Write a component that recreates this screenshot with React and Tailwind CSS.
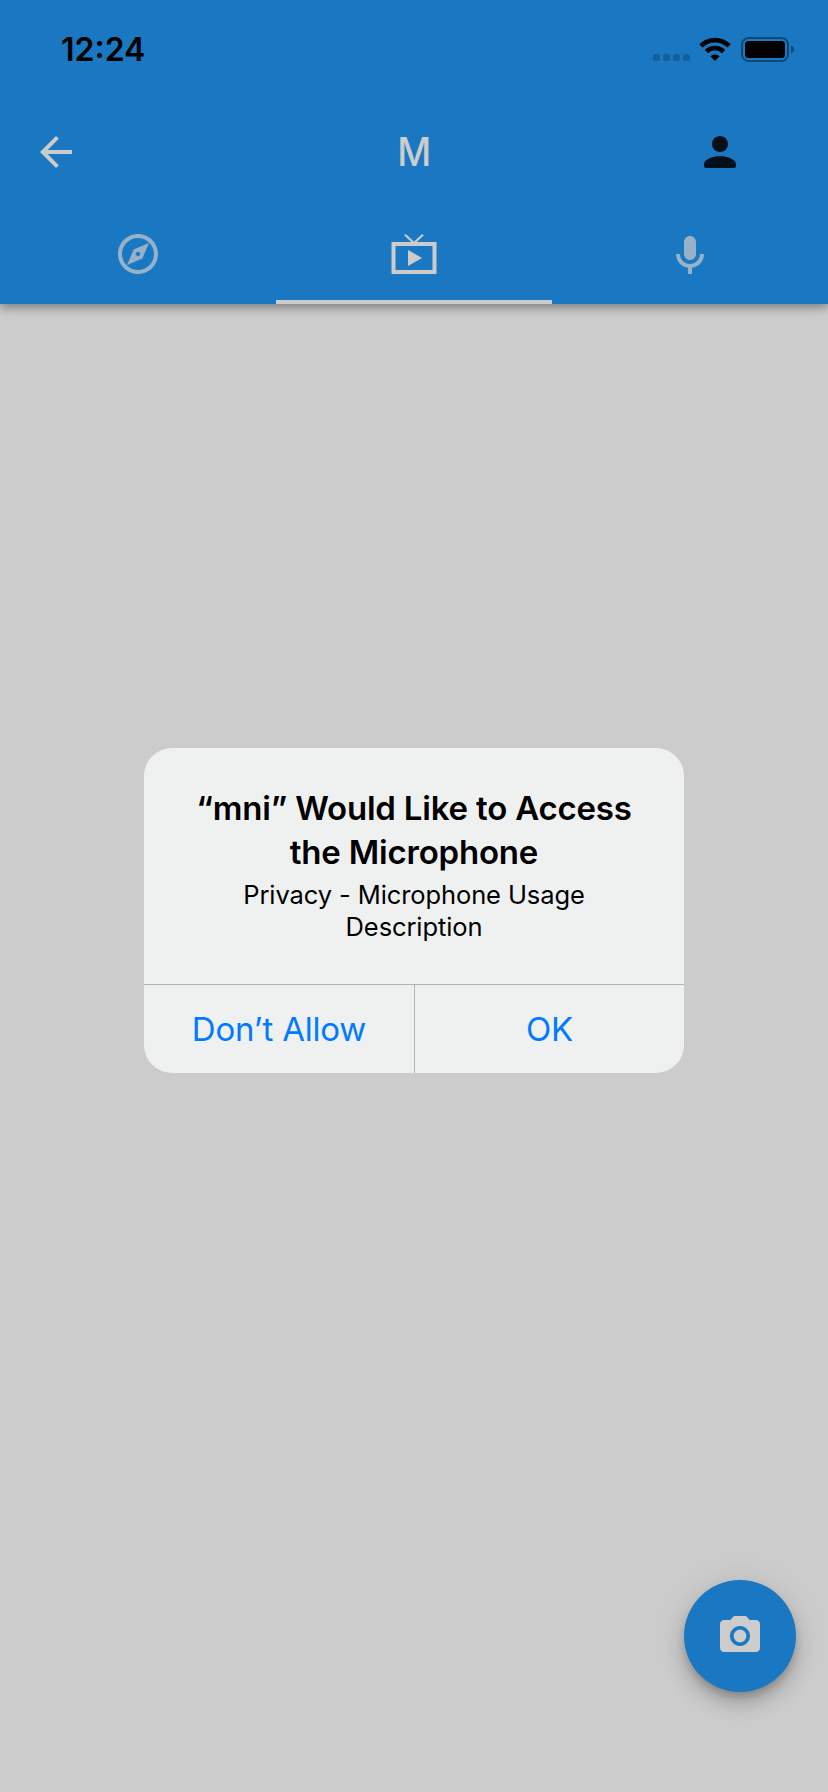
import React from "react";

function Icon({ className = "", children }) {
  return (
    <svg viewBox="0 0 24 24" fill="currentColor" className={`h-12 w-12 ${className}`}>
      {children}
    </svg>
  );
}

function StatusBar() {
  return (
    <div className="flex h-[104px] items-start justify-between pl-[61px] pr-[34px] text-black">
      <time className="pt-[30px] text-[32px] leading-10 font-semibold">12:24</time>
      <div className="flex items-start pt-[37px]">
        <div className="mt-[17px] flex gap-[3px]">
          <span className="h-[7px] w-[7px] rounded-[2px] bg-black/20" />
          <span className="h-[7px] w-[7px] rounded-[2px] bg-black/20" />
          <span className="h-[7px] w-[7px] rounded-[2px] bg-black/20" />
          <span className="h-[7px] w-[7px] rounded-[2px] bg-black/20" />
        </div>
        <svg viewBox="0 0 32 24" className="ml-[9px] h-6 w-8" fill="none" stroke="currentColor">
          <path d="M1.9 8.9a20 20 0 0 1 28.2 0" strokeWidth="4.8" />
          <path d="M7.4 14.6a12.2 12.2 0 0 1 17.2 0" strokeWidth="4.6" />
          <path d="M11.4 19.3a6.5 6.5 0 0 1 9.2 0L16 24z" fill="currentColor" stroke="none" />
        </svg>
        <svg viewBox="0 0 53 25" className="ml-[10px] h-[25px] w-[53px]">
          <rect x="1" y="1" width="46" height="23" rx="6.5" fill="none" stroke="#000" strokeOpacity="0.4" strokeWidth="2" />
          <rect x="4" y="4" width="40" height="17" rx="3.5" />
          <path d="M50 8.500c1.800.7 3 2.200 3 4s-1.200 3.300-3 4z" fillOpacity="0.4" />
        </svg>
      </div>
    </div>
  );
}

function Header() {
  return (
    <header className="relative flex h-[304px] flex-col bg-[#1a78c2] shadow-[0_4px_8px_rgba(0,0,0,0.24),0_2px_12px_rgba(0,0,0,0.18)]">
      <StatusBar />
      <div className="grid h-24 grid-cols-[1fr_auto_1fr] items-center pr-[84px] pl-8 text-[#ccc]">
        <Icon>
          <path d="M20 11H7.830l5.590-5.590L12 4l-8 8 8 8 1.410-1.410L7.830 13H20v-2z" />
        </Icon>
        <h1 className="translate-x-[26px] scale-x-[0.93] text-[40px] leading-[48px] font-medium">M</h1>
        <Icon className="justify-self-end text-[#03101a]">
          <path d="M12 12c2.210 0 4-1.790 4-4s-1.790-4-4-4-4 1.790-4 4 1.790 4 4 4zm0 2c-2.670 0-8 1.340-8 4v1c0 .55.45 1 1 1h14c.55 0 1-.45 1-1v-1c0-2.660-5.330-4-8-4z" />
        </Icon>
      </div>
      <nav className="grid h-[104px] grid-cols-3 text-[#97b2c8]">
        <div className="flex items-center justify-center pb-px pt-[5px]">
          <Icon>
            <path d="M12 10.900c-.61 0-1.100.49-1.100 1.100s.49 1.100 1.100 1.100 1.100-.49 1.100-1.100-.49-1.100-1.100-1.100zM12 2C6.480 2 2 6.480 2 12s4.480 10 10 10 10-4.480 10-10S17.520 2 12 2zm0 18c-4.410 0-8-3.590-8-8s3.590-8 8-8 8 3.590 8 8-3.590 8-8 8zm2.190-5.810L6.500 17.500l3.310-7.690L17.500 6.500z" fillRule="evenodd" />
          </Icon>
        </div>
        <div className="flex items-center justify-center border-b-4 border-[#ccc] pt-2 text-[#ccc]">
          <svg viewBox="0 0 46 40" className="h-10 w-[46px]" fill="none" stroke="currentColor">
            <path d="M14 .8l9 8.200 9-8.200" strokeWidth="2.200" />
            <path d="M2.500 10h41v28h-41z" strokeWidth="4" />
            <path d="M17 16v16l14-8z" fill="currentColor" stroke="none" />
          </svg>
        </div>
        <div className="flex items-center justify-center pt-2">
          <Icon>
            <path d="M12 14c1.660 0 3-1.340 3-3V5c0-1.660-1.340-3-3-3S9 3.340 9 5v6c0 1.660 1.340 3 3 3zm5-3c0 2.760-2.240 5-5 5s-5-2.240-5-5H5c0 3.530 2.610 6.430 6 6.920V21h2v-3.080c3.390-.49 6-3.390 6-6.920z" />
          </Icon>
        </div>
      </nav>
    </header>
  );
}

function PermissionDialog() {
  return (
    <div className="absolute top-[748px] left-36 flex h-[325px] w-[540px] flex-col overflow-hidden rounded-[28px] bg-[#eff1f1] text-center text-black">
      <div className="h-[236px] pt-[38px]">
        <h2 className="text-[33px] leading-[44px] font-semibold tracking-[-0.2px]">
          “mni” Would Like to Access
          <br />
          the Microphone
        </h2>
        <p className="pt-[5px] text-[25.5px] leading-8 tracking-[-0.1px]">
          Privacy - Microphone Usage
          <br />
          Description
        </p>
      </div>
      <div className="grid h-[89px] grid-cols-2 border-t border-[#b0b2b2] text-[33px] leading-[88px] text-[#007aff]">
        <button className="tracking-[-0.2px]">Don’t Allow</button>
        <button className="border-l border-[#b0b2b2] tracking-[-0.2px]">OK</button>
      </div>
    </div>
  );
}

export default function App() {
  return (
    <div className="relative flex h-[1792px] w-[828px] flex-col overflow-hidden bg-[#ccc] font-['Inter',sans-serif]">
      <Header />
      <main className="flex flex-1 items-end justify-end pr-8 pb-[100px]">
        <button className="flex h-28 w-28 items-center justify-center rounded-full bg-[#1a78c2] text-[#ccc] shadow-[0_6px_10px_-2px_rgba(0,0,0,0.2),0_12px_20px_rgba(0,0,0,0.18),0_2px_36px_rgba(0,0,0,0.08)]">
          <Icon>
            <circle cx="12" cy="12" r="3.200" />
            <path d="M9 2L7.170 4H4c-1.100 0-2 .9-2 2v12c0 1.100.9 2 2 2h16c1.100 0 2-.9 2-2V6c0-1.100-.9-2-2-2h-3.170L15 2H9zm3 15c-2.760 0-5-2.240-5-5s2.240-5 5-5 5 2.240 5 5-2.240 5-5 5z" />
          </Icon>
        </button>
      </main>
      <PermissionDialog />
    </div>
  );
}
